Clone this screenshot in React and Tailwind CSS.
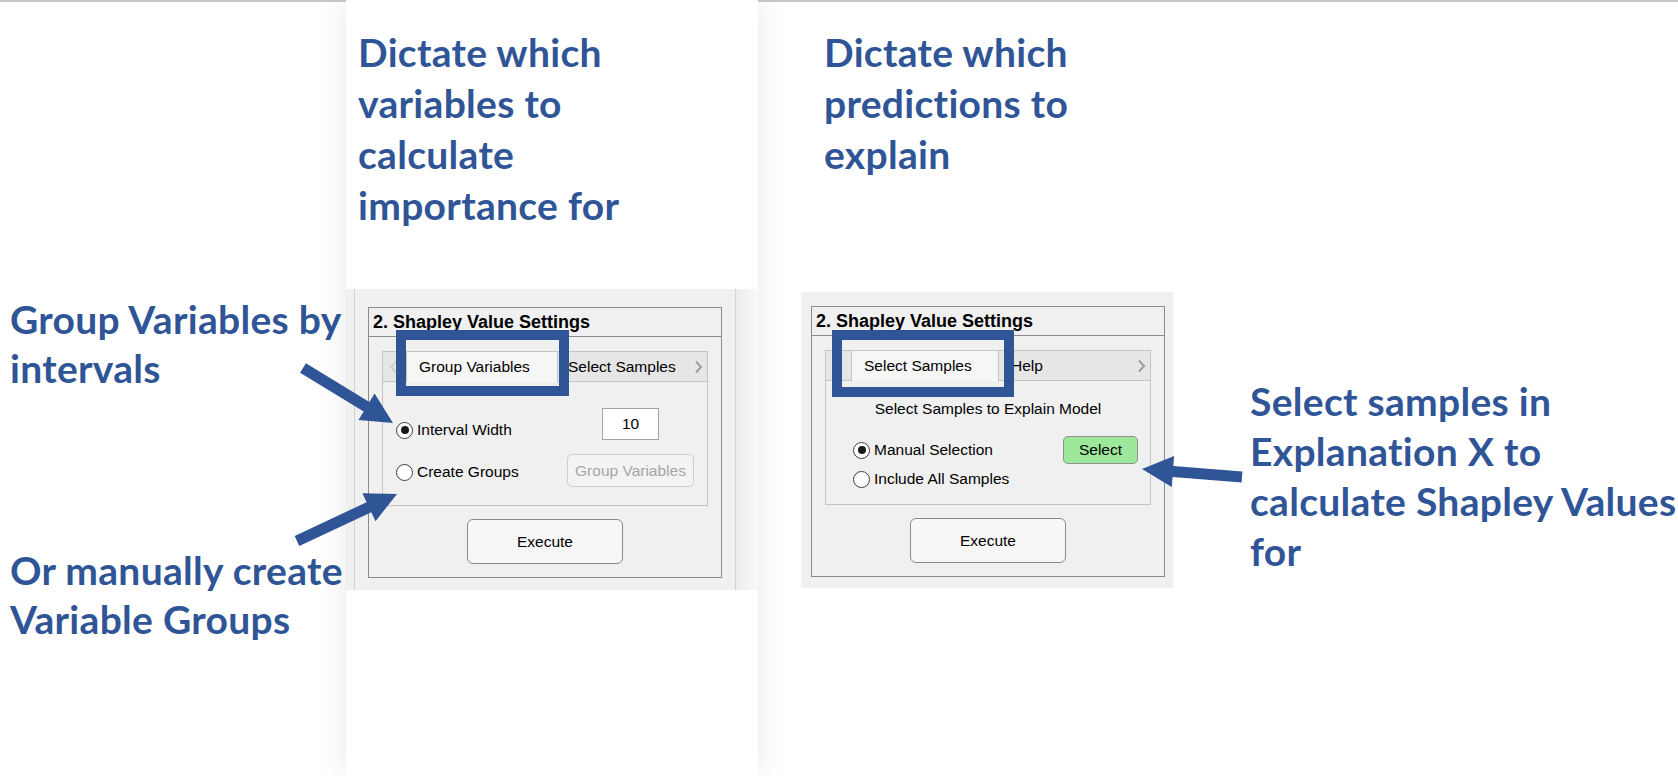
import React from 'react';

const HEAD = "font-['Lato',sans-serif] font-bold text-[39px] tracking-[0.3px] text-[#2f5597] whitespace-nowrap";
const UI = "font-['Liberation_Sans',Arial,sans-serif] text-black";

// arrow polygon from tail to tip (shaft + triangular head)
const arrowPoints = ([x1, y1], [x2, y2], shaft = 11, headLen = 31, headW = 31) => {
    const len = Math.hypot(x2 - x1, y2 - y1);
    const ux = (x2 - x1) / len, uy = (y2 - y1) / len;
    const nx = -uy, ny = ux;
    const bx = x2 - ux * headLen, by = y2 - uy * headLen;
    const s = shaft / 2, h = headW / 2;
    return [
        [x1 + nx * s, y1 + ny * s],
        [bx + nx * s, by + ny * s],
        [bx + nx * h, by + ny * h],
        [x2, y2],
        [bx - nx * h, by - ny * h],
        [bx - nx * s, by - ny * s],
        [x1 - nx * s, y1 - ny * s],
    ].map(p => p.map(v => v.toFixed(1)).join(',')).join(' ');
};

const ARROWS = [
    { from: [303, 368], to: [393, 423] },
    { from: [297, 541], to: [397, 494] },
    { from: [1242, 477], to: [1142, 469] },
];

const Chevron = ({ left = false, color = '#9d9d9d' }) => (
    <svg width="9" height="14" viewBox="0 0 9 14">
        <polyline points={left ? '7,1.5 2,7 7,12.5' : '2,1.5 7,7 2,12.5'} fill="none" stroke={color} strokeWidth="2" />
    </svg>
);

const Radio = ({ checked, label }) => (
    <div className="flex items-center gap-[4px]">
        <div className="w-[17px] h-[17px] rounded-full border border-[#3c3c3c] bg-white flex items-center justify-center">
            {checked && <div className="w-[8px] h-[8px] rounded-full bg-[#1a1a1a]" />}
        </div>
        <span className="text-[15.5px] leading-[18px]">{label}</span>
    </div>
);

const SettingsPanel = ({ leadWidth, activeLabel, activeWidth, nextLabel, nextGap, highlight, children }) => (
    <div className={`relative w-[354px] h-[271px] border border-[#8c8c8c] flex flex-col ${UI}`}>
        <div className="h-[29px] border-b border-[#8c8c8c] pl-[4px] text-[18px] leading-[28px] font-bold">
            2. Shapley Value Settings
        </div>
        <div className="flex-1 px-[13px] pt-[14px] flex flex-col">
            <div className="h-[155px] border border-[#c4c4c4] flex flex-col">
                {/* tab strip */}
                <div className="h-[30px] bg-[#e6e6e6] border-b border-[#c4c4c4] flex items-start">
                    <div className="h-full flex items-center pl-[6px]" style={{ width: leadWidth }}>
                        <Chevron left color="#cfcfcf" />
                    </div>
                    <div
                        className="h-[30px] bg-[#f6f6f6] border-x border-[#c4c4c4] flex items-center pl-[12px] text-[15.5px]"
                        style={{ width: activeWidth }}
                    >
                        {activeLabel}
                    </div>
                    <div className="h-full flex items-center text-[15.5px]" style={{ marginLeft: nextGap }}>
                        {nextLabel}
                    </div>
                    <div className="ml-auto h-full flex items-center pr-[4px]">
                        <Chevron />
                    </div>
                </div>
                <div className="flex-1">{children}</div>
            </div>
            <button className="mt-[13px] mx-auto w-[156px] h-[45px] rounded-[6px] border border-[#8a8a8a] bg-[#f7f7f7] text-[15.5px]">
                Execute
            </button>
        </div>
        <div className={`absolute border-[10px] border-[#2f5597] ${highlight}`} />
    </div>
);

const App = () => {
    return (
        <div className="w-[1678px] h-[776px] bg-white overflow-hidden relative flex">

            {/* left annotations */}
            <div className="w-[346px] shrink-0 border-t-2 border-[#c8c8c8] pt-[293px] pl-[10px]">
                <div className={`${HEAD} leading-[49px]`}>
                    Group Variables by<br />intervals
                </div>
                <div className={`${HEAD} leading-[49px] mt-[153px]`}>
                    Or manually create<br />Variable Groups
                </div>
            </div>

            {/* page strip with first screenshot */}
            <div className="w-[412px] shrink-0 relative z-10 bg-white shadow-[0_0_30px_rgba(0,0,0,0.09)] pt-[27px]">
                <div className={`${HEAD} leading-[51px] pl-[12px]`}>
                    Dictate which<br />variables to<br />calculate<br />importance for
                </div>
                <div className="mt-[58px] h-[301px] bg-[#f0f0f0] flex">
                    <div className="w-[8px]" />
                    <div className="w-px bg-[#d2d2d2]" />
                    <div className="w-[380px] pl-[13px] pt-[18px]">
                        <SettingsPanel
                            leadWidth={23}
                            activeLabel="Group Variables"
                            activeWidth={152}
                            nextLabel="Select Samples"
                            nextGap={10}
                            highlight="left-[27px] top-[22px] w-[173px] h-[66px]"
                        >
                            <div className="pt-[26px] pl-[13px] pr-[13px] flex flex-col gap-[14px]">
                                <div className="flex justify-between items-start">
                                    <div className="mt-[13px]"><Radio checked label="Interval Width" /></div>
                                    <div className="w-[127px] flex justify-center">
                                        <div className="w-[57px] h-[32px] bg-white border border-[#a3a3a3] flex items-center justify-center text-[15.5px]">
                                            10
                                        </div>
                                    </div>
                                </div>
                                <div className="flex justify-between items-center">
                                    <div className="mt-[3px]"><Radio label="Create Groups" /></div>
                                    <div className="w-[127px] h-[33px] rounded-[5px] border border-[#cdcdcd] bg-[#f3f3f3] text-[#a6a6a6] text-[15.5px] flex items-center justify-center">
                                        Group Variables
                                    </div>
                                </div>
                            </div>
                        </SettingsPanel>
                    </div>
                    <div className="w-px bg-[#d2d2d2]" />
                    <div className="flex-1 bg-linear-to-r from-[#ececec] to-[#f9f9f9]" />
                </div>
            </div>

            {/* right side */}
            <div className="flex-1 border-t-2 border-[#c8c8c8] pt-[25px]">
                <div className={`${HEAD} leading-[51px] pl-[66px]`}>
                    Dictate which<br />predictions to<br />explain
                </div>
                <div className="mt-[112px] flex items-start">
                    <div className="ml-[43px] w-[372px] h-[296px] bg-[#f0f0f0] pl-[10px] pt-[14px]">
                        <SettingsPanel
                            leadWidth={25}
                            activeLabel="Select Samples"
                            activeWidth={148}
                            nextLabel="Help"
                            nextGap={12}
                            highlight="left-[20px] top-[23px] w-[182px] h-[67px]"
                        >
                            <div className="pt-[19px] flex flex-col">
                                <div className="text-center text-[15.5px] leading-[18px]">Select Samples to Explain Model</div>
                                <div className="mt-[18px] pl-[27px] pr-[12px] flex justify-between items-center">
                                    <Radio checked label="Manual Selection" />
                                    <div className="w-[75px] h-[28px] rounded-[5px] border border-[#8f8f8f] bg-[#9de89a] flex items-center justify-center text-[15.5px]">
                                        Select
                                    </div>
                                </div>
                                <div className="mt-[6px] pl-[27px]">
                                    <Radio label="Include All Samples" />
                                </div>
                            </div>
                        </SettingsPanel>
                    </div>
                    <div className={`${HEAD} leading-[50px] ml-[77px] mt-[84px]`}>
                        Select samples in<br />Explanation X to<br />calculate Shapley Values<br />for
                    </div>
                </div>
            </div>

            {/* arrows */}
            <svg className="absolute inset-0 z-20 pointer-events-none" width="1678" height="776" viewBox="0 0 1678 776">
                {ARROWS.map((a, i) => (
                    <polygon key={i} points={arrowPoints(a.from, a.to)} fill="#2f5597" />
                ))}
            </svg>
        </div>
    );
};

export default App;
